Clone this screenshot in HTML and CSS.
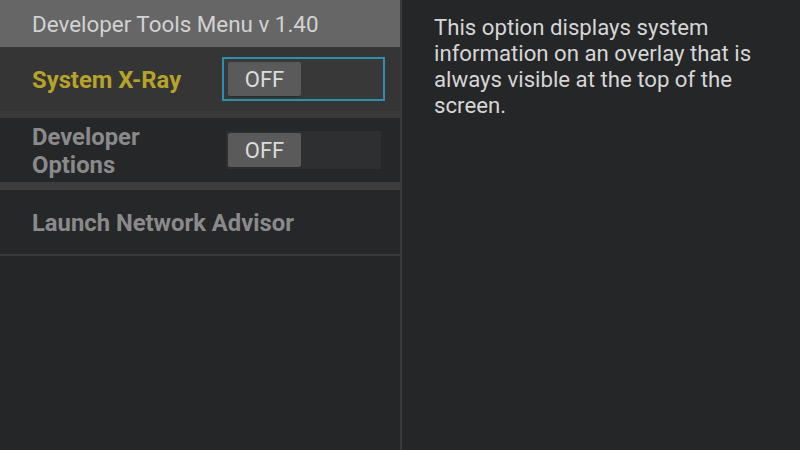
FILE: index.html
```html
<!DOCTYPE html>
<html>
<head>
<meta charset="utf-8">
<link rel="stylesheet" href="styles.css">
</head>
<body>
<div class="screen">
  <div class="menu">
    <div class="menu-header">Developer Tools Menu v 1.40</div>
    <div class="row row-selected">
      <div class="label label-active">System X-Ray</div>
      <div class="toggle toggle-focused"><div class="knob">OFF</div></div>
    </div>
    <div class="row">
      <div class="label">Developer<br>Options</div>
      <div class="toggle"><div class="knob">OFF</div></div>
    </div>
    <div class="separator"></div>
    <div class="row row-last">
      <div class="label">Launch Network Advisor</div>
    </div>
  </div>
  <div class="info">
    <p class="info-text">This option displays system information on an overlay that is always visible at the top of the screen.</p>
  </div>
</div>
</body>
</html>
```
FILE: styles.css
```css
html, body {
  margin: 0;
  padding: 0;
  background: #252628;
}
.screen {
  width: 800px;
  height: 450px;
  display: flex;
  font-family: Roboto, "Noto Sans", sans-serif;
  background: #252628;
  overflow: hidden;
}
.menu {
  width: 400px;
  flex: none;
  border-right: 2px solid #3a3a3b;
  display: flex;
  flex-direction: column;
}
.menu-header {
  height: 46px;
  padding-top: 1px;
  background: #666666;
  color: #d2d2d2;
  font-size: 22.4px;
  display: flex;
  align-items: center;
  padding-left: 32px;
}
.row {
  height: 64px;
  display: flex;
  align-items: center;
  padding-left: 32px;
  background: #262729;
}
.row-selected {
  background: #353535;
  border-bottom: 7px solid #3a3a3a;
}
.row-last {
  border-bottom: 2px solid #3a3a3b;
}
.separator {
  height: 8px;
  background: #3c3c3c;
}
.label {
  width: 190px;
  padding-top: 2px;
  font-size: 23.8px;
  font-weight: bold;
  line-height: 28px;
  color: #8a8a8a;
  white-space: nowrap;
}
.label-active {
  color: #b5a32a;
}
.toggle {
  width: 151px;
  height: 34px;
  padding: 2px;
  margin-left: 4px;
  background: #2e2f31;
}
.toggle-focused {
  width: 151px;
  height: 34px;
  padding: 3px 4px;
  margin-left: 0;
  border: 2px solid #2f8db0;
  background: #383838;
}
.knob {
  width: 73px;
  height: 33px;
  padding-top: 1px;
  background: #5a5a5a;
  border-radius: 2px;
  box-shadow: 0 1px 0 #2a2a2a;
  color: #dcdcdc;
  font-size: 22px;
  display: flex;
  align-items: center;
  justify-content: center;
}
.info {
  flex: 1;
  padding: 14px 32px 0 32px;
}
.info-text {
  margin: 0;
  color: #d6d6d6;
  font-size: 22.2px;
  line-height: 26px;
  max-width: 340px;
}
```
